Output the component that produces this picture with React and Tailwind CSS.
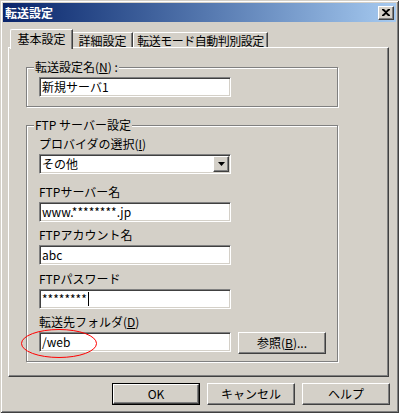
import React from "react";

const sunken =
  "bg-white border border-t-[#808080] border-l-[#808080] border-r-white border-b-white shadow-[inset_1px_1px_0_#404040,inset_-1px_-1px_0_#d4d0c8]";
const raised =
  "bg-[#d4d0c8] border border-t-white border-l-white border-r-[#404040] border-b-[#404040] shadow-[inset_-1px_-1px_0_#808080]";
const etched =
  "border border-[#808080] shadow-[inset_1px_1px_0_#fff,1px_1px_0_#fff]";

const TextBox = ({ children, className = "" }) => (
  <div className={`${sunken} h-[20px] w-[192px] flex items-center pl-[2px] leading-[14px] ${className}`}>
    {children}
  </div>
);

const Label = ({ children, className = "" }) => (
  <div className={`h-[14px] leading-[14px] ${className}`}>{children}</div>
);

const Legend = ({ children }) => (
  <div className="-mt-[8px] -ml-[5px] px-[1px] w-fit h-[14px] leading-[14px] bg-[#d4d0c8]">
    {children}
  </div>
);

const Button = ({ children, isDefault }) =>
  isDefault ? (
    <div className="w-[88px] h-[22px] border border-black flex">
      <div className={`${raised} flex-1 flex items-center justify-center`}>{children}</div>
    </div>
  ) : (
    <div className={`${raised} w-[88px] h-[22px] flex items-center justify-center`}>{children}</div>
  );

export default function App() {
  return (
    <div className="w-[399px] h-[413px] bg-[#d4d0c8] p-[3px] flex flex-col text-[12px] text-black font-['Noto_Sans_CJK_JP',sans-serif] shadow-[inset_1px_1px_0_#d4d0c8,inset_-1px_-1px_0_#404040,inset_2px_2px_0_#fff,inset_-2px_-2px_0_#808080]">
      {/* title bar */}
      <div className="h-[19px] flex items-center justify-between pl-[2px] pr-[2px] bg-gradient-to-r from-[#0a246a] to-[#a6caf0]">
        <span className="text-white font-bold leading-[14px]">転送設定</span>
        <div className={`${raised} w-[16px] h-[14px] flex items-center justify-center`}>
          <svg width="8" height="7" viewBox="0 0 8 7">
            <path d="M0 0h2l2 2 2-2h2v1L5 3.5 8 6v1H6L4 5 2 7H0V6l3-2.5L0 1z" fill="#000" />
          </svg>
        </div>
      </div>

      <div className="pt-[7px] pl-[5px] flex flex-col">
        {/* tabs */}
        <div className="flex items-end h-[18px] pl-[2px]">
          <div className="relative z-10 -mb-[2px] w-[63px] h-[20px] bg-[#d4d0c8] border-l border-t border-r border-l-white border-t-white border-r-[#404040] rounded-tl-[2px] shadow-[inset_-1px_0_0_#808080] flex justify-center pt-[2px] leading-[14px]">
            基本設定
          </div>
          <div className="w-[60px] h-[15px] border-t border-r border-t-white border-r-[#404040] shadow-[inset_-1px_0_0_#808080] flex justify-center leading-[14px] pt-[1px]">
            詳細設定
          </div>
          <div className="w-[135px] h-[15px] border-l border-t border-r border-l-white border-t-white border-r-[#404040] rounded-tl-[2px] shadow-[inset_-1px_0_0_#808080] flex justify-center leading-[14px] pt-[1px] tracking-[-0.5px] whitespace-nowrap">
            転送モード自動判別設定
          </div>
        </div>

        {/* panel */}
        <div className="w-[381px] h-[330px] border border-t-white border-l-white border-r-[#404040] border-b-[#404040] shadow-[inset_-1px_-1px_0_#808080] pl-[17px] pt-[19px] flex flex-col">
          <div className={`${etched} w-[312px] h-[40px] pl-[12px] flex flex-col`}>
            <Legend>
              転送設定名(<u>N</u>) :
            </Legend>
            <TextBox className="mt-[3px]">新規サーバ1</TextBox>
          </div>

          <div className={`${etched} mt-[18px] w-[312px] h-[237px] pl-[12px] flex flex-col`}>
            <Legend>FTP サーバー設定</Legend>
            <Label className="mt-[5px]">
              プロバイダの選択(<u>I</u>)
            </Label>
            <div className={`${sunken} mt-[3px] h-[20px] w-[192px] flex items-center justify-between pl-[2px] pr-[1px] leading-[14px]`}>
              <span>その他</span>
              <div className={`${raised} w-[16px] h-[16px] flex items-center justify-center`}>
                <svg width="7" height="4" viewBox="0 0 7 4">
                  <path d="M0 0h7L3.5 4z" fill="#000" />
                </svg>
              </div>
            </div>

            <Label className="mt-[11px]">FTPサーバー名</Label>
            <TextBox className="mt-[3px]">www.********.jp</TextBox>

            <Label className="mt-[6px]">FTPアカウント名</Label>
            <TextBox className="mt-[3px]">abc</TextBox>

            <Label className="mt-[7px]">FTPパスワード</Label>
            <TextBox className="mt-[3px]">
              <span>********</span>
              <span className="ml-[1px] w-px h-[14px] bg-black" />
            </TextBox>

            <Label className="mt-[6px]">
              転送先フォルダ(<u>D</u>)
            </Label>
            <div className="relative mt-[3px] flex items-start">
              <TextBox>/web</TextBox>
              <div className="ml-[7px]">
                <Button>
                  参照(<u>B</u>)...
                </Button>
              </div>
              <svg className="absolute -left-[18px] -top-[3px]" width="76" height="29" viewBox="0 0 76 29">
                <ellipse cx="38" cy="14.5" rx="37.5" ry="14" fill="none" stroke="#ff0000" strokeWidth="1" />
              </svg>
            </div>
          </div>
        </div>
      </div>

      {/* buttons */}
      <div className="mt-[6px] flex justify-end gap-[7px] pr-[6px]">
        <Button isDefault>OK</Button>
        <Button>キャンセル</Button>
        <Button>ヘルプ</Button>
      </div>
    </div>
  );
}
